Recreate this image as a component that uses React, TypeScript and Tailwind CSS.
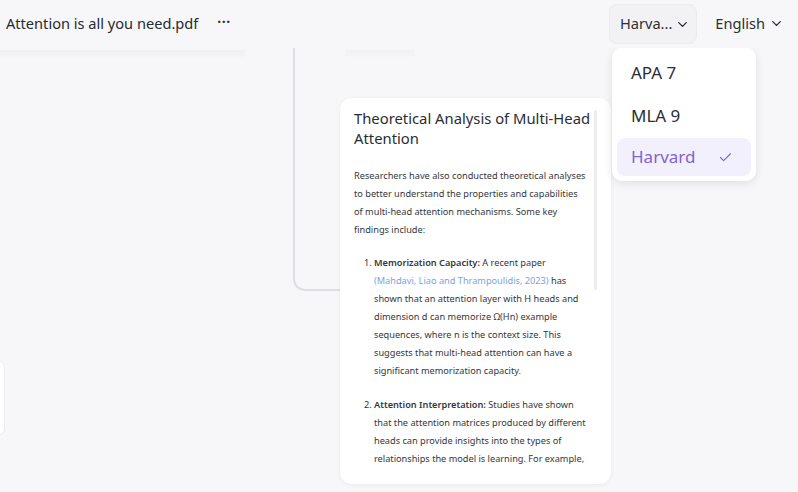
import { Check, ChevronDown } from "lucide-react";

const font = { fontFamily: '"Noto Sans", "Open Sans", sans-serif' };

export default function App() {
  return (
    <div
      className="relative w-[798px] h-[492px] overflow-hidden bg-[#f7f7f9] text-[#2b2f36]"
      style={font}
    >
      {/* canvas nodes behind */}
      <div className="absolute left-0 top-[50px] w-[245px] h-[9px] bg-gradient-to-b from-[#efeff2] to-[#f7f7f9]" />
      <div className="absolute left-[293px] top-[20px] w-[300px] h-[271px] rounded-bl-xl border-l-2 border-b-2 border-[#dfdfe3] bg-[#f7f7f9]" />
      <div className="absolute left-[345px] top-[50px] w-[70px] h-[8px] bg-gradient-to-b from-[#f1f1f4] to-[#f7f7f9]" />
      <div className="absolute left-[-20px] top-[360px] w-[25px] h-[76px] rounded-lg border border-[#ececef] bg-white" />

      {/* header */}
      <div className="relative z-10 flex items-center h-[48px] px-[6px] bg-[#f7f7f9]">
        <span className="text-[14.6px] text-[#262a31]">Attention is all you need.pdf</span>
        <span className="ml-[19px] text-[14px] tracking-[0.5px] font-bold text-[#333] leading-none mb-[4px]">···</span>
        <div className="ml-auto flex items-center gap-[18px] mr-[8px]">
          <div className="flex items-center gap-[3px] h-[40px] pl-[10px] pr-[6px] rounded-lg bg-[#f2f2f5] border border-[#ececef]">
            <span className="text-[14.6px]">Harva...</span>
            <ChevronDown size={15} strokeWidth={2.2} />
          </div>
          <div className="flex items-center gap-[4px]">
            <span className="text-[14.6px]">English</span>
            <ChevronDown size={15} strokeWidth={2.2} />
          </div>
        </div>
      </div>

      {/* main card */}
      <div className="absolute left-[340px] top-[98px] w-[271px] h-[386px] rounded-xl bg-white shadow-[0_1px_4px_rgba(0,0,0,0.06)] overflow-hidden">
        <div className="absolute right-[14px] top-[12px] w-[3px] h-[180px] rounded bg-[#ececee]" />
        <div className="pl-[14px] pr-[20px] pt-[10px]">
          <h3 className="w-[245px] text-[14.8px] leading-[20px] text-[#2a2d33]">
            Theoretical Analysis of Multi-Head Attention
          </h3>
          <p className="mt-[19px] text-[9.2px] leading-[18px] text-[#34373d]">
            Researchers have also conducted theoretical analyses to better understand the properties and capabilities
            <br />
            of multi-head attention mechanisms. Some key findings include:
          </p>
          <ol className="mt-[15px] pl-[20px] pr-[3px] list-decimal text-[9.2px] leading-[18px] text-[#34373d] flex flex-col gap-[16px]">
            <li>
              <span className="font-semibold">Memorization Capacity:</span> A recent paper{" "}
              <span className="text-[#7aa4e0]">(Mahdavi, Liao and Thrampoulidis, 2023)</span> has shown that an attention layer with H heads and dimension d can memorize Ω(Hn) example sequences, where n is the context size. This suggests that multi-head attention can have a significant memorization capacity.
            </li>
            <li>
              <span className="font-semibold">Attention Interpretation:</span> Studies have shown that the attention matrices produced by different heads can provide insights into the types of relationships the model is learning. For example,
            </li>
          </ol>
        </div>
      </div>

      {/* dropdown menu */}
      <div className="absolute left-[612px] top-[47px] w-[144px] rounded-[10px] bg-white shadow-[0_2px_10px_rgba(0,0,0,0.10)] p-[5px] flex flex-col">
        <div className="h-[42px] flex items-center px-[14px] text-[17px] text-[#2a2d33]">APA 7</div>
        <div className="h-[44px] flex items-center px-[14px] text-[17px] text-[#2a2d33]">MLA 9</div>
        <div className="h-[38px] flex items-center justify-between px-[14px] rounded-lg bg-[#f3f0fd] text-[17px] text-[#7f64d2]">
          <span>Harvard</span>
          <Check size={15} strokeWidth={1.8} className="mr-[4px]" />
        </div>
      </div>
    </div>
  );
}
